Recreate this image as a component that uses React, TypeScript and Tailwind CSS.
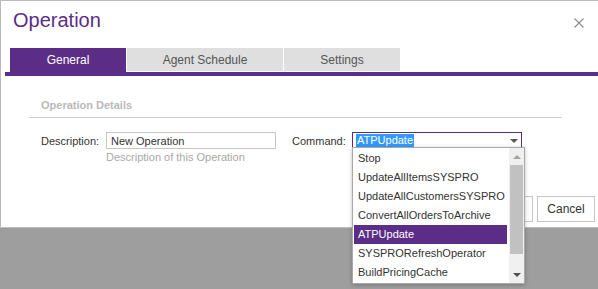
import React from "react";

const commands = [
  "Stop",
  "UpdateAllItemsSYSPRO",
  "UpdateAllCustomersSYSPRO",
  "ConvertAllOrdersToArchive",
  "ATPUpdate",
  "SYSPRORefreshOperator",
  "BuildPricingCache",
];

const tabs = [
  { label: "General", width: "w-[116px]" },
  { label: "Agent Schedule", width: "w-[156px]" },
  { label: "Settings", width: "w-[116px]" },
];

export default function App() {
  const selected = "ATPUpdate";

  return (
    <div
      className="relative w-[598px] h-[289px] overflow-hidden bg-[#9e9e9e]"
      style={{ fontFamily: '"Liberation Sans", Arial, sans-serif' }}
    >
      {/* Dialog */}
      <div className="h-[228px] bg-white border-l border-t border-b border-[#bcbcbc]">
        {/* Header */}
        <div className="flex items-start justify-between pl-[12px] pr-[14px] pt-[6px] h-[47px]">
          <h1 className="text-[20px] leading-[26px] text-[#5c2d87]">Operation</h1>
          <svg viewBox="0 0 10 10" className="w-[10px] h-[10px] mt-[11px]" aria-hidden="true">
            <path d="M0.5 0.5L9.5 9.5M9.5 0.5L0.5 9.5" stroke="#8a8a8a" strokeWidth="1.1" />
          </svg>
        </div>

        {/* Tabs */}
        <div className="pl-[4px]">
          <div className="flex items-start pl-[5px] gap-[1px] h-[24px]">
            {tabs.map((t, i) => (
              <div
                key={t.label}
                className={`${t.width} flex items-center justify-center text-[12px] ${
                  i === 0 ? "h-[24px] bg-[#5c2d87] text-white" : "h-[23px] bg-[#dfdfdf] text-[#555]"
                }`}
              >
                {t.label}
              </div>
            ))}
          </div>
          <div className="h-[4px] bg-[#5c2d87]" />
        </div>

        {/* Content */}
        <div className="pl-[28px] pr-[36px] pt-[22px] text-[11px] leading-[14px]">
          <div className="border-b border-[#cfcfcf] pl-[12px] pb-[5px]">
            <span className="font-bold text-[#b9b9b9]">Operation Details</span>
          </div>

          <div className="flex pl-[12px] pt-[14px]">
            <div className="flex">
              <span className="text-[#333] mt-[2px] w-[65px]">Description:</span>
              <div>
                <div className="w-[170px] h-[17px] border border-[#c6c6c6] flex items-center pl-[4px] text-[#333]">
                  New Operation
                </div>
                <p className="text-[#a8a8a8] mt-[1px]">Description of this Operation</p>
              </div>
            </div>
            <div className="flex ml-[16px]">
              <span className="text-[#333] mt-[2px] w-[60px]">Command:</span>
              <div className="w-[170px] h-[17px] border border-[#5c2d87] flex items-center justify-between pl-[3px] pr-[3px]">
                <span className="leading-[13px] bg-[#3399ff] text-white px-[1px]">{selected}</span>
                <svg viewBox="0 0 8 4" className="w-[8px] h-[4px]" aria-hidden="true">
                  <path d="M0 0H8L4 4Z" fill="#555" />
                </svg>
              </div>
            </div>
          </div>
        </div>

        {/* Footer buttons */}
        <div className="flex justify-end gap-[4px] pr-[3px] mt-[32px]">
          <button className="w-[60px] h-[26px] border border-[#c6c6c6] bg-white text-[12px] text-[#333]">
            OK
          </button>
          <button className="w-[58px] h-[26px] border border-[#c6c6c6] bg-white text-[12px] text-[#333]">
            Cancel
          </button>
        </div>
      </div>

      {/* Open dropdown list */}
      <div className="absolute left-[352px] top-[147px] w-[173px] h-[137px] bg-white border border-[#a9a9a9] shadow-[0_1px_4px_rgba(0,0,0,0.25)] flex">
        <div className="flex-1 pt-[1px] pl-[1px] pr-[2px]">
          {commands.map((c) => (
            <div
              key={c}
              className={`h-[19px] flex items-center pl-[4px] text-[11px] ${
                c === selected ? "bg-[#5c2d87] text-white" : "text-[#333]"
              }`}
            >
              {c}
            </div>
          ))}
        </div>
        <div className="w-[15px] bg-[#f0f0f0] flex flex-col items-center">
          <div className="h-[17px] flex items-center justify-center">
            <svg viewBox="0 0 8 4" className="w-[8px] h-[4px]" aria-hidden="true">
              <path d="M0 4H8L4 0Z" fill="#a3a3a3" />
            </svg>
          </div>
          <div className="w-[13px] h-[89px] bg-[#c1c1c1]" />
          <div className="flex-1" />
          <div className="h-[17px] flex items-center justify-center">
            <svg viewBox="0 0 8 4" className="w-[8px] h-[4px]" aria-hidden="true">
              <path d="M0 0H8L4 4Z" fill="#505050" />
            </svg>
          </div>
        </div>
      </div>
    </div>
  );
}
